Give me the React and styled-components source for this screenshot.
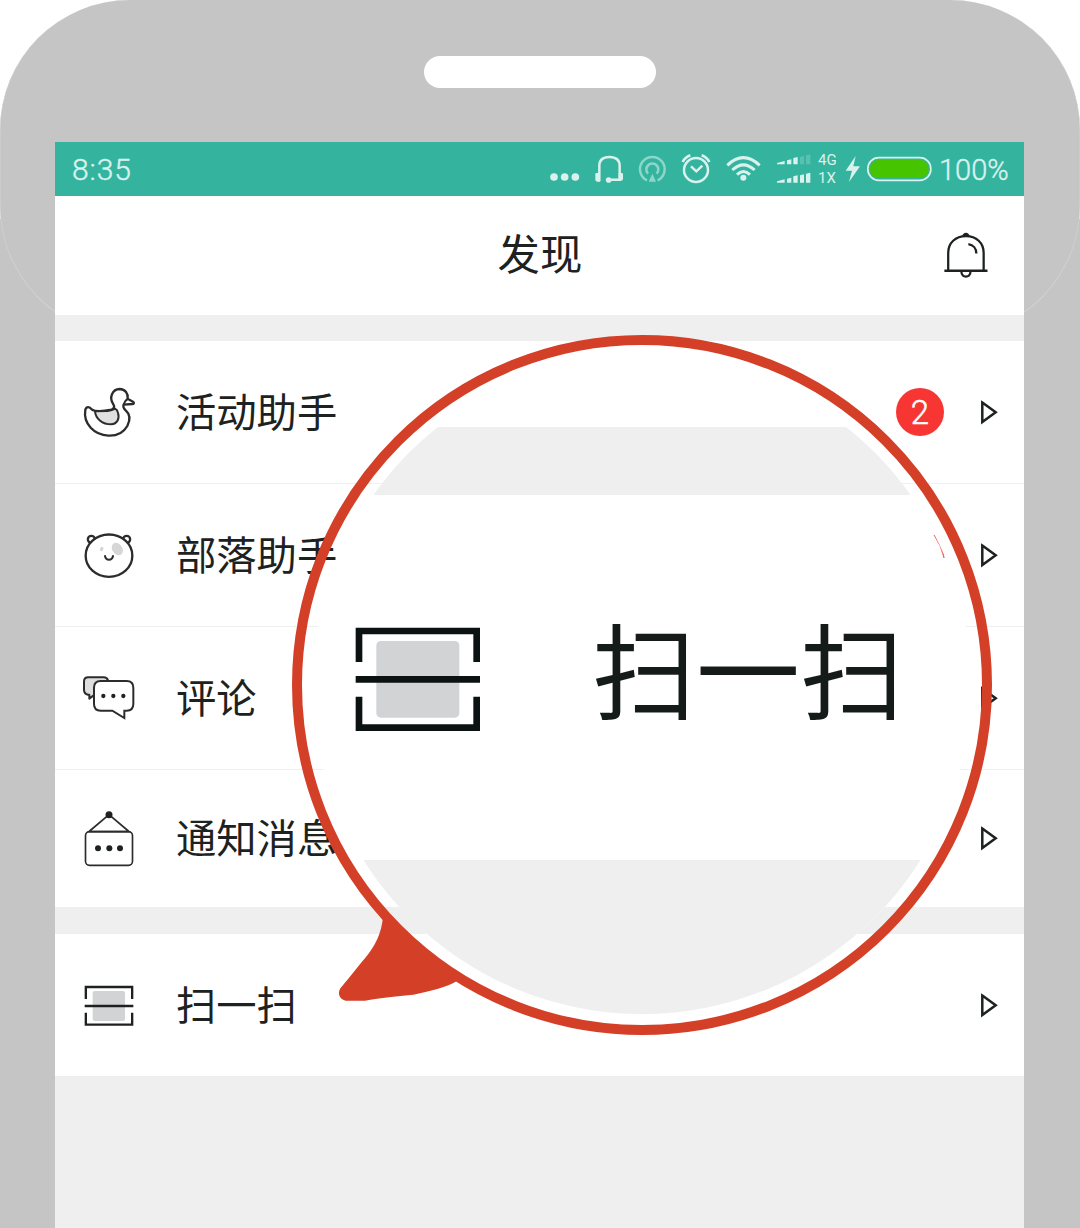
import React from "react";
import styled, { createGlobalStyle } from "styled-components";

const ink = "#1d2221";
const red = "#d43f27";
const band = "#efefef";
const shell = "#c5c5c5";
const pale = "#d9f2ed";
const cjk = `"Noto Sans CJK SC", "Noto Sans", sans-serif`;

const Global = createGlobalStyle`
  * { box-sizing: border-box; }
  body { margin: 0; background: #fff; }
  svg { display: block; flex: none; }
`;

const Phone = styled.div`
  position: relative;
  isolation: isolate;
  width: 1080px;
  height: 1228px;
  overflow: hidden;
  display: flex;
  flex-direction: column;
  align-items: center;
  padding-top: 56px;
  background: linear-gradient(#fff 219px, ${shell} 219px);
`;

const Head = styled.div`
  position: absolute;
  z-index: -1;
  left: 0;
  top: 0;
  width: 1080px;
  height: 336px;
  border-radius: 130px;
  background: ${shell};
  box-shadow: inset 0 -0.5px 0 0.5px #d3d3d3;
`;

const Speaker = styled.div`
  flex: none;
  width: 232px;
  height: 32px;
  border-radius: 16px;
  background: #fff;
`;

const Screen = styled.main`
  flex: 1;
  width: 969px;
  margin: 54px 1px 0 0;
  display: flex;
  flex-direction: column;
  background: ${band};
  font-family: ${cjk};
  color: ${ink};
`;

const StatusBar = styled.div`
  flex: none;
  height: 54px;
  display: flex;
  align-items: center;
  padding: 0 16px 0 17px;
  background: #34b49f;
  color: ${pale};
  font-family: Roboto, sans-serif;
`;

const Clock = styled.span`
  flex: 1;
  font-size: 30px;
  font-weight: 300;
  letter-spacing: 0.9px;
  line-height: 54px;
  padding-top: 1px;
  -webkit-text-stroke: 0.4px ${pale};
`;

const Networks = styled.div`
  width: 27px;
  font-size: 15px;
  line-height: 18px;
`;

const Percent = styled.span`
  width: 69px;
  margin-left: 6px;
  font-size: 29px;
  font-weight: 300;
  line-height: 54px;
  padding-top: 1px;
  white-space: nowrap;
  -webkit-text-stroke: 0.4px ${pale};
`;

const Header = styled.header`
  flex: none;
  height: 119px;
  display: grid;
  grid-template-columns: 84px 1fr 84px;
  align-items: center;
  background: #fff;
`;

const Title = styled.h1`
  grid-column: 2;
  margin: 0;
  padding: 0 0 7px 1px;
  text-align: center;
  font-size: 42.4px;
  font-weight: 400;
  line-height: 60px;
`;

const Group = styled.section`
  flex: none;
  margin-top: ${(p) => p.$gap}px;
  background: #fff;
`;

const Row = styled.div`
  height: ${(p) => p.$height}px;
  display: flex;
  align-items: center;
  padding: 0 25px 0 24px;
  border-bottom: ${(p) => (p.$line ? `1px solid ${p.$line}` : "0")};
`;

const Label = styled.span`
  flex: 1;
  margin-left: 37px;
  padding-bottom: 5px;
  font-size: 40.3px;
  line-height: 58px;
`;

const Badge = styled.span`
  width: 48px;
  height: 48px;
  margin-right: 35px;
  border-radius: 50%;
  background: #f73633;
  color: #fff;
  font: 300 33px/50px Roboto, sans-serif;
  -webkit-text-stroke: 0.5px #fff;
  text-align: center;
`;

const Ring = styled.div`
  position: absolute;
  left: 292px;
  top: 335px;
  width: 700px;
  height: 700px;
  border: 10px solid ${red};
  border-radius: 50%;
`;

const Tail = styled.svg`
  position: absolute;
  left: 335px;
  top: 910px;
`;

const Lens = styled.div`
  position: absolute;
  left: 313px;
  top: 356px;
  width: 658px;
  height: 658px;
  border-radius: 50%;
  overflow: hidden;
  display: flex;
  flex-direction: column;
  padding-top: 71px;
  background: #fff;
  font-family: ${cjk};
  color: #151b19;
`;

const LensBand = styled.div`
  flex: ${(p) => (p.$height ? "none" : 1)};
  height: ${(p) => (p.$height ? p.$height + "px" : "auto")};
  background: ${band};
`;

const LensRow = styled.div`
  flex: none;
  height: 365px;
  display: flex;
  align-items: center;
  padding: 3px 0 0 40px;
  filter: blur(0.6px);
`;

const LensLabel = styled.span`
  margin-left: 109px;
  padding-bottom: 24px;
  font-size: 104px;
  line-height: 150px;
  white-space: nowrap;
`;

const Glint = styled.svg`
  position: absolute;
  left: 618px;
  top: 176px;
`;

const StatusIcon = ({ x, w, children }) => (
  <svg width={w / 3} height="54" viewBox={`${x} 0 ${w} 162`} fill="none" stroke={pale}>
    {children}
  </svg>
);

const RowIcon = ({ y, children }) => (
  <svg width="60" height="60" viewBox={`72 ${y} 180 180`} fill="none" stroke="#2c2c2c" strokeWidth="7" strokeLinecap="round" strokeLinejoin="round">
    {children}
  </svg>
);

const Duck = () => (
  <RowIcon y={36}>
    <path d="M91 119C95 108 104 110 110 118C122 127 150 123 170 119C178 116 179 109 175 103C161 82 172 58 194 57C211 58 220 71 218 86L235 96Q239 101 233 102L206 104C203 110 206 115 212 121C225 132 226 150 217 168C205 189 182 198 160 197C118 195 84 162 91 119Z" />
    <path d="M120 124C122 147 143 163 168 163C188 162 194 145 189 128Q187 119 180 116Q172 121 158 123Z" fill="#e0e0e0" strokeWidth="6" />
    <path d="M218 87Q210 91 206 103" strokeWidth="6" />
  </RowIcon>
);

const Bear = () => (
  <RowIcon y={465}>
    <circle cx="109" cy="508" r="10.5" />
    <circle cx="215" cy="508" r="10.5" />
    <ellipse cx="162" cy="557" rx="70" ry="63.5" fill="#fff" />
    <ellipse cx="187" cy="537" rx="15" ry="20" fill="#d6d6d6" stroke="none" transform="rotate(-35 187 537)" />
    <ellipse cx="140" cy="537" rx="5" ry="7" fill="#d6d6d6" stroke="none" transform="rotate(25 140 537)" />
    <path d="M150 558Q152 569 162 569Q172 569 174 558" strokeWidth="6" />
  </RowIcon>
);

const Comments = () => (
  <RowIcon y={39}>
    <path d="M103 119H99Q87 116 87 104V80Q87 67 100 67H146Q156 67 159 76L119 98V119L103 131Z" fill="#dedede" strokeWidth="6" />
    <path d="M137 78H215Q235 78 235 98V147Q235 167 215 167H208V189L172 167H137Q117 167 117 147V98Q117 78 137 78Z" fill="#fff" strokeWidth="6" strokeLinejoin="miter" />
    <g fill="#222" stroke="none">
      <circle cx="145" cy="123" r="6.5" />
      <circle cx="175" cy="123" r="6.5" />
      <circle cx="205" cy="123" r="6.5" />
    </g>
  </RowIcon>
);

const Board = () => (
  <RowIcon y={459}>
    <rect x="91.500" y="530" width="141" height="101" rx="12" strokeWidth="5" />
    <path d="M103 530H222M104 528L162 479L220 528" strokeWidth="5" />
    <g fill={ink} stroke="none">
      <circle cx="162" cy="479" r="10.500" />
      <circle cx="129" cy="580" r="9" />
      <circle cx="163" cy="580" r="9" />
      <circle cx="195" cy="580" r="9" />
    </g>
  </RowIcon>
);

const Scan = () => (
  <RowIcon y={255}>
    <rect x="113" y="303" width="97" height="90" rx="6" fill="#d2d3d5" stroke="none" />
    <path d="M92.500 327V291H231.500V327M92.500 368V404H231.500V368M89 348H235" stroke={ink} strokeWidth="7" strokeLinecap="butt" strokeLinejoin="miter" />
  </RowIcon>
);

const BigScan = () => (
  <svg width="130" height="109" viewBox="190 75 390 327" fill="none">
    <rect x="260" y="123" width="249" height="230" rx="14" fill="#d2d3d5" />
    <path d="M208 186V93H561V186M208 290V383H561V290M198 238H571" stroke="#0c1211" strokeWidth="20" />
  </svg>
);

const Bell = () => (
  <svg width="52" height="54" viewBox="1323.4 57.5 149.6 162" preserveAspectRatio="none" fill="none" stroke={ink} strokeWidth="6.500">
    <path d="M1347 182V129C1347 99 1368 79 1398 79C1428 79 1449 99 1449 129V182" />
    <path d="M1336 183H1460" strokeWidth="7.500" />
    <path d="M1385 186C1385 205 1411 205 1411 186M1405 103C1419 105 1428 116 1428 131" />
    <path d="M1386 81Q1390 69 1398 69Q1406 69 1410 81Z" fill={ink} stroke="none" />
  </svg>
);

const Arrow = () => (
  <svg width="20" height="26" viewBox="0 0 20 26">
    <path d="M3.300 3.600L16.700 13.300L3.300 23Z" fill="none" stroke={ink} strokeWidth="2.500" />
  </svg>
);

const SignalRow = ({ base, dim }) => (
  <g transform={`translate(0 ${base})`}>
    <path d="M33 0V-4L56 -10V0ZM63 0V-12L76 -15V0ZM82 0V-19L95 -22V0Z" />
    <path d="M102 0V-22L114 -25V0ZM120 0V-27L133 -30V0Z" opacity={dim ? 0.22 : 1} />
  </g>
);

const rows = [
  { label: "活动助手", icon: Duck, badge: 2, height: 143, line: "#f0f0f0" },
  { label: "部落助手", icon: Bear, height: 143, line: "#f0f0f0" },
  { label: "评论", icon: Comments, height: 143, line: "#f0f0f0" },
  { label: "通知消息", icon: Board, height: 137, line: "#fff" },
];

const MenuRow = ({ label, icon: Icon, badge, height, line }) => (
  <Row $height={height} $line={line}>
    <Icon />
    <Label>{label}</Label>
    {badge && <Badge>{badge}</Badge>}
    <Arrow />
  </Row>
);

export default function App() {
  return (
    <Phone>
      <Global />
      <Head />
      <Speaker />
      <Screen>
        <StatusBar>
          <Clock>8:35</Clock>
          <StatusIcon x={20} w={120}>
            <g fill={pale} stroke="none">
              <circle cx="38" cy="105" r="11.500" />
              <circle cx="70" cy="105" r="11.500" />
              <circle cx="102" cy="105" r="11.500" />
            </g>
          </StatusIcon>
          <StatusIcon x={140} w={130}>
            <path d="M174 118V72C174 53 186 45 204 45C222 45 235 53 235 72V113H204" strokeWidth="7.500" />
            <path d="M162 96Q162 93 166 93H176V119H168Q162 118 162 113ZM245 96Q245 93 241 93H232V116H239Q245 116 245 111Z" fill={pale} stroke="none" />
            <circle cx="202" cy="114" r="8.500" fill={pale} stroke="none" />
          </StatusIcon>
          <StatusIcon x={270} w={130}>
            <g opacity="0.55" strokeWidth="7.500">
              <path d="M318 115A37 37 0 1 1 350 115" />
              <path d="M321 95A18 18 0 1 1 347 95" />
              <path d="M334 95L345 119H323Z" fill={pale} stroke="none" />
            </g>
          </StatusIcon>
          <StatusIcon x={400} w={132}>
            <circle cx="466" cy="84" r="36" strokeWidth="7.500" />
            <path d="M451 73L467 88L485 71" strokeWidth="7.500" />
            <path d="M426 60Q433 46 449 40M506 60Q499 46 483 40" strokeWidth="8" />
          </StatusIcon>
          <StatusIcon x={532} w={152}>
            <g strokeWidth="9">
              <path d="M560 70Q608 24 657 70" />
              <path d="M575 84Q608 53 642 84" />
              <path d="M589 98Q608 79 628 98" />
            </g>
            <circle cx="608" cy="107" r="9" fill={pale} stroke="none" />
          </StatusIcon>
          <StatusIcon x={9} w={147}>
            <g fill={pale} stroke="none">
              <SignalRow base={67} dim />
              <SignalRow base={122} />
            </g>
          </StatusIcon>
          <Networks>
            <div>4G</div>
            <div>1X</div>
          </Networks>
          <StatusIcon x={237} w={264}>
            <path d="M269 42L239 86H258L249 120L282 73H262Z" fill={pale} stroke="none" />
            <rect x="305.500" y="47" width="189" height="68" rx="33" strokeWidth="5" />
            <rect x="312" y="54" width="176" height="54" rx="25" fill="#47c400" stroke="none" />
          </StatusIcon>
          <Percent>100%</Percent>
        </StatusBar>
        <Header>
          <Title>发现</Title>
          <Bell />
        </Header>
        <Group $gap={26}>
          {rows.map((r) => (
            <MenuRow key={r.label} {...r} />
          ))}
        </Group>
        <Group $gap={27}>
          <MenuRow label="扫一扫" icon={Scan} height={142} />
        </Group>
      </Screen>
      <Lens>
        <LensBand $height={68} />
        <LensRow>
          <BigScan />
          <LensLabel>扫一扫</LensLabel>
        </LensRow>
        <LensBand />
        <Glint width="16" height="30" viewBox="0 0 16 30">
          <path d="M3 3Q13 11 13 26Q10 13 3 3Z" fill="#f73633" stroke="#f73633" strokeWidth="0.800" opacity="0.850" />
        </Glint>
      </Lens>
      <Ring />
      <Tail width="133.3" height="96.7" viewBox="840 60 400 290">
        <path d="M984 80C980 130 960 168 930 205C912 226 884 262 862 288C845 303 850 328 872 332H930C960 325 1010 321 1075 314C1130 302 1175 292 1206 273A1040 1040 0 0 1 984 80Z" fill={red} />
      </Tail>
    </Phone>
  );
}
